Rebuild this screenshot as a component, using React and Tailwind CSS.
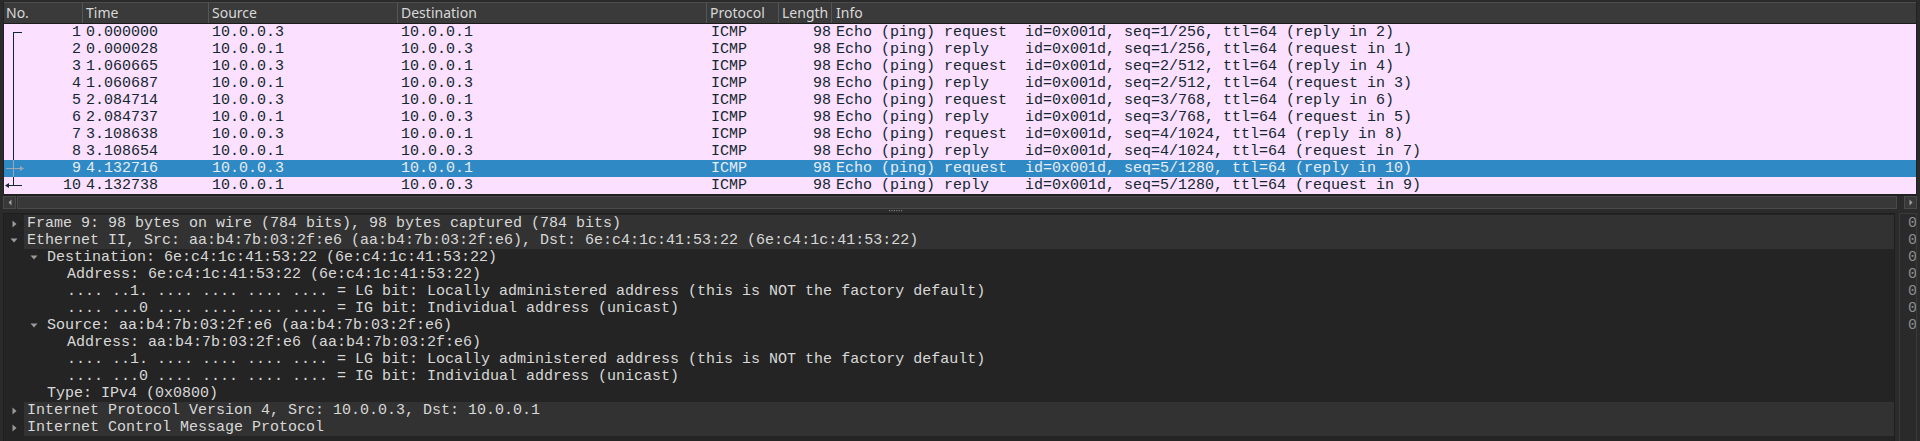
import React from "react";

const MONO = { fontFamily: '"Liberation Mono", monospace' };
const SANS = { fontFamily: '"Noto Sans", sans-serif' };

const packets = [
  ["1", "0.000000", "10.0.0.3", "10.0.0.1", "Echo (ping) request  id=0x001d, seq=1/256, ttl=64 (reply in 2)"],
  ["2", "0.000028", "10.0.0.1", "10.0.0.3", "Echo (ping) reply    id=0x001d, seq=1/256, ttl=64 (request in 1)"],
  ["3", "1.060665", "10.0.0.3", "10.0.0.1", "Echo (ping) request  id=0x001d, seq=2/512, ttl=64 (reply in 4)"],
  ["4", "1.060687", "10.0.0.1", "10.0.0.3", "Echo (ping) reply    id=0x001d, seq=2/512, ttl=64 (request in 3)"],
  ["5", "2.084714", "10.0.0.3", "10.0.0.1", "Echo (ping) request  id=0x001d, seq=3/768, ttl=64 (reply in 6)"],
  ["6", "2.084737", "10.0.0.1", "10.0.0.3", "Echo (ping) reply    id=0x001d, seq=3/768, ttl=64 (request in 5)"],
  ["7", "3.108638", "10.0.0.3", "10.0.0.1", "Echo (ping) request  id=0x001d, seq=4/1024, ttl=64 (reply in 8)"],
  ["8", "3.108654", "10.0.0.1", "10.0.0.3", "Echo (ping) reply    id=0x001d, seq=4/1024, ttl=64 (request in 7)"],
  ["9", "4.132716", "10.0.0.3", "10.0.0.1", "Echo (ping) request  id=0x001d, seq=5/1280, ttl=64 (reply in 10)"],
  ["10", "4.132738", "10.0.0.1", "10.0.0.3", "Echo (ping) reply    id=0x001d, seq=5/1280, ttl=64 (request in 9)"],
];

const LG = ".... ..1. .... .... .... .... = LG bit: Locally administered address (this is NOT the factory default)";
const IG = ".... ...0 .... .... .... .... = IG bit: Individual address (unicast)";

const details = [
  { l: 0, a: "c", t: "Frame 9: 98 bytes on wire (784 bits), 98 bytes captured (784 bits)" },
  { l: 0, a: "e", t: "Ethernet II, Src: aa:b4:7b:03:2f:e6 (aa:b4:7b:03:2f:e6), Dst: 6e:c4:1c:41:53:22 (6e:c4:1c:41:53:22)" },
  { l: 1, a: "e", t: "Destination: 6e:c4:1c:41:53:22 (6e:c4:1c:41:53:22)" },
  { l: 2, t: "Address: 6e:c4:1c:41:53:22 (6e:c4:1c:41:53:22)" },
  { l: 2, t: LG },
  { l: 2, t: IG },
  { l: 1, a: "e", t: "Source: aa:b4:7b:03:2f:e6 (aa:b4:7b:03:2f:e6)" },
  { l: 2, t: "Address: aa:b4:7b:03:2f:e6 (aa:b4:7b:03:2f:e6)" },
  { l: 2, t: LG },
  { l: 2, t: IG },
  { l: 1, t: "Type: IPv4 (0x0800)" },
  { l: 0, a: "c", t: "Internet Protocol Version 4, Src: 10.0.0.3, Dst: 10.0.0.1" },
  { l: 0, a: "c", t: "Internet Control Message Protocol" },
];

const levelPad = ["pl-0", "pl-[20px]", "pl-[40px]"];

function Tree({ i, sel }) {
  const c = sel ? "#9aa7b4" : "#12272e";
  return (
    <svg width="24" height="17" className="block shrink-0">
      {i === 0 && (
        <>
          <line x1="9.5" y1="8.5" x2="18" y2="8.5" stroke={c} />
          <line x1="9.5" y1="8" x2="9.5" y2="17" stroke={c} />
        </>
      )}
      {i > 0 && i < 9 && <line x1="9.5" y1="0" x2="9.5" y2="17" stroke={c} />}
      {i === 8 && (
        <>
          <line x1="2" y1="8.5" x2="17" y2="8.5" stroke={c} />
          <polygon points="20,8.5 16,6 16,11" fill={c} />
        </>
      )}
      {i === 9 && (
        <>
          <line x1="9.5" y1="0" x2="9.5" y2="9" stroke={c} />
          <line x1="4" y1="8.5" x2="18" y2="8.5" stroke={c} />
          <polygon points="1,8.5 5,6 5,11" fill={c} />
        </>
      )}
    </svg>
  );
}

function Arrow({ kind }) {
  if (kind === "c")
    return (
      <svg width="5" height="8" className="block">
        <polygon points="0.5,0.5 4.5,4 0.5,7.5" fill="#9a9a9a" />
      </svg>
    );
  return (
    <svg width="8" height="5" className="block">
      <polygon points="0.5,0.5 7.5,0.5 4,4.5" fill="#9a9a9a" />
    </svg>
  );
}

function HeaderCell({ w, children, last, pad = "pl-[3px]" }) {
  return (
    <div
      className={`${w} ${pad} h-full flex items-center shrink-0 ${last ? "flex-1" : "border-r border-[#565656]"}`}
    >
      {children}
    </div>
  );
}

export default function App() {
  return (
    <div className="w-[1920px] h-[441px] overflow-hidden bg-[#2b2b2b] flex flex-col">
      {/* Packet list */}
      <div className="pt-[2px] mx-[3px] flex flex-col">
        <div className="border-l border-r border-[#222222] flex flex-col">
          {/* header */}
          <div
            className="h-[22px] border-t border-[#4c4c4c] border-b border-b-[#1d1d1d] bg-[#3a3a3a] flex text-[14px] text-[#d8d8d8] leading-none"
            style={SANS}
          >
            <HeaderCell w="w-[79px]" pad="pl-[2px]">No.</HeaderCell>
            <HeaderCell w="w-[126px]">Time</HeaderCell>
            <HeaderCell w="w-[189px]">Source</HeaderCell>
            <HeaderCell w="w-[309px]">Destination</HeaderCell>
            <HeaderCell w="w-[72px]">Protocol</HeaderCell>
            <HeaderCell w="w-[53px]">Length</HeaderCell>
            <HeaderCell w="w-auto" last pad="pl-[4px]">Info</HeaderCell>
          </div>
          {/* rows */}
          <div className="flex flex-col text-[15px] leading-[17px]" style={MONO}>
            {packets.map((p, i) => {
              const sel = i === 8;
              return (
                <div
                  key={i}
                  className={`h-[17px] flex whitespace-pre ${
                    sel ? "bg-[#2f89c5] text-[#e6edf4]" : "bg-[#fce0ff] text-[#12272e]"
                  }`}
                >
                  <div className="w-[79px] shrink-0 flex pr-[2px]">
                    <Tree i={i} sel={sel} />
                    <span className="flex-1 text-right">{p[0]}</span>
                  </div>
                  <div className="w-[126px] shrink-0 pl-[3px]">{p[1]}</div>
                  <div className="w-[189px] shrink-0 pl-[3px]">{p[2]}</div>
                  <div className="w-[309px] shrink-0 pl-[3px]">{p[3]}</div>
                  <div className="w-[72px] shrink-0 pl-[4px]">ICMP</div>
                  <div className="w-[53px] shrink-0 pr-[1px] text-right">98</div>
                  <div className="flex-1 pl-[4px] overflow-hidden">{p[4]}</div>
                </div>
              );
            })}
          </div>
          {/* bottom border + horizontal scrollbar */}
          <div className="h-[2px] bg-[#1f1f1f]" />
        </div>
        <div className="h-[13px] flex bg-[#2b2b2b]">
          <div className="w-[13px] h-full border border-[#4a4a4a] bg-[#383838] flex items-center justify-center">
            <svg width="4" height="7" className="block">
              <polygon points="3.5,0.5 0.5,3.5 3.5,6.5" fill="#a0a0a0" />
            </svg>
          </div>
          <div className="flex-1 ml-[1px] h-full border border-[#4a4a4a] bg-[#383838]" />
          <div className="w-[7px]" />
          <div className="w-[13px] h-full border border-[#4a4a4a] bg-[#383838] flex items-center justify-center">
            <svg width="4" height="7" className="block">
              <polygon points="0.5,0.5 3.5,3.5 0.5,6.5" fill="#a0a0a0" />
            </svg>
          </div>
        </div>
      </div>

      {/* splitter */}
      <div className="h-[4px] flex items-center pl-[889px]">
        <svg width="14" height="2" className="block">
          {[0, 1, 2, 3, 4, 5].map((k) => (
            <rect key={k} x={k * 2.4} y="0" width="1.2" height="1.2" fill="#7c7c7c" />
          ))}
        </svg>
      </div>

      {/* bottom panes */}
      <div className="flex-1 flex ml-[3px] mr-[3px] min-h-0">
        <div className="w-[1892px] shrink-0 border-l border-t border-r border-[#1e1e1e] bg-[#242424] pt-[1px] overflow-hidden">
          <div className="flex flex-col text-[15px] leading-[17px] text-[#d8d8d8]" style={MONO}>
            {details.map((d, i) => (
              <div key={i} className={`h-[17px] flex whitespace-pre ${levelPad[d.l]}`}>
                <div className="w-[20px] shrink-0 flex items-center justify-center">
                  {d.a && <Arrow kind={d.a} />}
                </div>
                <div className={`flex-1 pl-[3px] ${d.l === 0 ? "bg-[#323232]" : ""}`}>{d.t}</div>
              </div>
            ))}
          </div>
        </div>
        <div className="w-[4px] shrink-0" />
        <div className="flex-1 border-l border-t border-r border-[#3a3a3a] bg-[#2a2a2a] pt-[1px] overflow-hidden">
          <div className="flex flex-col text-[15px] leading-[17px] text-[#8e8e8e] pl-[8px] whitespace-pre" style={MONO}>
            {["0000", "0010", "0020", "0030", "0040", "0050", "0060"].map((o) => (
              <div key={o} className="h-[17px]">{o}</div>
            ))}
          </div>
        </div>
      </div>
    </div>
  );
}
